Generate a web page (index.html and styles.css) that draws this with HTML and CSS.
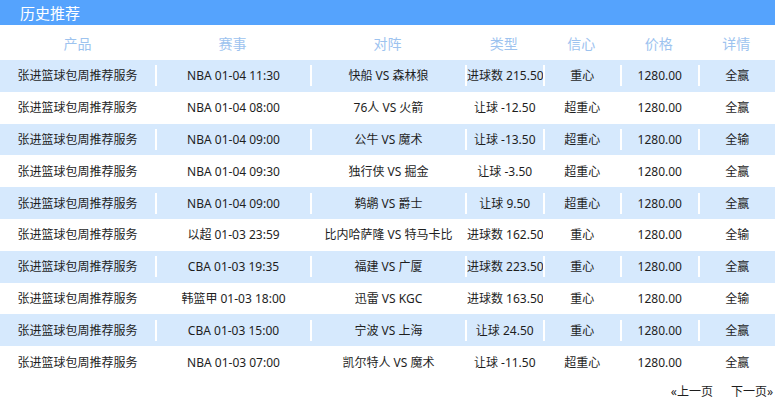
FILE: index.html
```html
<!DOCTYPE html>
<html lang="zh-CN">
<head>
<meta charset="utf-8">
<title>历史推荐</title>
<link rel="stylesheet" href="styles.css">
</head>
<body>
<div class="panel">
  <div class="title">历史推荐</div>
  <table class="grid">
    <colgroup>
      <col class="c-wide"><col class="c-wide"><col class="c-wide">
      <col class="c-narrow"><col class="c-narrow"><col class="c-narrow"><col class="c-narrow">
    </colgroup>
    <thead>
      <tr class="head">
        <th>产品</th><th>赛事</th><th>对阵</th><th>类型</th><th>信心</th><th>价格</th><th>详情</th>
      </tr>
    </thead>
    <tbody>
      <tr class="alt"><td><div class="cell">张进篮球包周推荐服务</div></td><td><div class="cell">NBA 01-04 11:30</div></td><td><div class="cell">快船 VS 森林狼</div></td><td><div class="cell">进球数 215.50</div></td><td><div class="cell">重心</div></td><td><div class="cell">1280.00</div></td><td><div class="cell">全赢</div></td></tr>
      <tr><td><div class="cell">张进篮球包周推荐服务</div></td><td><div class="cell">NBA 01-04 08:00</div></td><td><div class="cell">76人 VS 火箭</div></td><td><div class="cell">让球 -12.50</div></td><td><div class="cell">超重心</div></td><td><div class="cell">1280.00</div></td><td><div class="cell">全赢</div></td></tr>
      <tr class="alt"><td><div class="cell">张进篮球包周推荐服务</div></td><td><div class="cell">NBA 01-04 09:00</div></td><td><div class="cell">公牛 VS 魔术</div></td><td><div class="cell">让球 -13.50</div></td><td><div class="cell">超重心</div></td><td><div class="cell">1280.00</div></td><td><div class="cell">全输</div></td></tr>
      <tr><td><div class="cell">张进篮球包周推荐服务</div></td><td><div class="cell">NBA 01-04 09:30</div></td><td><div class="cell">独行侠 VS 掘金</div></td><td><div class="cell">让球 -3.50</div></td><td><div class="cell">超重心</div></td><td><div class="cell">1280.00</div></td><td><div class="cell">全赢</div></td></tr>
      <tr class="alt"><td><div class="cell">张进篮球包周推荐服务</div></td><td><div class="cell">NBA 01-04 09:00</div></td><td><div class="cell">鹈鹕 VS 爵士</div></td><td><div class="cell">让球 9.50</div></td><td><div class="cell">超重心</div></td><td><div class="cell">1280.00</div></td><td><div class="cell">全赢</div></td></tr>
      <tr><td><div class="cell">张进篮球包周推荐服务</div></td><td><div class="cell">以超 01-03 23:59</div></td><td><div class="cell">比内哈萨隆 VS 特马卡比</div></td><td><div class="cell">进球数 162.50</div></td><td><div class="cell">重心</div></td><td><div class="cell">1280.00</div></td><td><div class="cell">全输</div></td></tr>
      <tr class="alt"><td><div class="cell">张进篮球包周推荐服务</div></td><td><div class="cell">CBA 01-03 19:35</div></td><td><div class="cell">福建 VS 广厦</div></td><td><div class="cell">进球数 223.50</div></td><td><div class="cell">重心</div></td><td><div class="cell">1280.00</div></td><td><div class="cell">全赢</div></td></tr>
      <tr><td><div class="cell">张进篮球包周推荐服务</div></td><td><div class="cell">韩篮甲 01-03 18:00</div></td><td><div class="cell">迅雷 VS KGC</div></td><td><div class="cell">进球数 163.50</div></td><td><div class="cell">重心</div></td><td><div class="cell">1280.00</div></td><td><div class="cell">全输</div></td></tr>
      <tr class="alt"><td><div class="cell">张进篮球包周推荐服务</div></td><td><div class="cell">CBA 01-03 15:00</div></td><td><div class="cell">宁波 VS 上海</div></td><td><div class="cell">让球 24.50</div></td><td><div class="cell">重心</div></td><td><div class="cell">1280.00</div></td><td><div class="cell">全赢</div></td></tr>
      <tr><td><div class="cell">张进篮球包周推荐服务</div></td><td><div class="cell">NBA 01-03 07:00</div></td><td><div class="cell">凯尔特人 VS 魔术</div></td><td><div class="cell">让球 -11.50</div></td><td><div class="cell">超重心</div></td><td><div class="cell">1280.00</div></td><td><div class="cell">全赢</div></td></tr>
    </tbody>
  </table>
  <div class="pager">
    <a class="pg">«上一页</a>
    <a class="pg">下一页»</a>
  </div>
</div>
</body>
</html>
```

FILE: styles.css
```css
html, body {
  margin: 0;
  padding: 0;
  background: #fff;
}
body {
  font-family: "Noto Sans", "Noto Sans CJK SC", sans-serif;
  color: #1e1e1e;
}
.panel {
  width: 775px;
}
.title {
  height: 25px;
  line-height: 25px;
  background: #55a3fd;
  color: #fff;
  font-size: 15px;
  padding-left: 20px;
  font-family: "Noto Sans CJK SC", sans-serif;
}
.grid {
  width: 775px;
  border-collapse: collapse;
  table-layout: fixed;
}
.c-wide { width: 20%; }
.c-narrow { width: 10%; }
.grid th {
  height: 35px;
  padding: 0;
  font-weight: normal;
  font-size: 14px;
  color: #9dc3ef;
  text-align: center;
  font-family: "Noto Sans CJK SC", sans-serif;
}
.grid td {
  height: 31.8px;
  padding: 0;
  font-size: 12px;
  text-align: center;
  white-space: nowrap;
  overflow: hidden;
}
.grid tr.alt td {
  background: #d6e9fd;
}
.cell {
  height: 21px;
  line-height: 21px;
  border-left: 2px solid #fff;
  overflow: hidden;
  white-space: nowrap;
}
.grid td:first-child .cell {
  border-left: 0;
}
.pager {
  display: flex;
  justify-content: flex-end;
  gap: 18px;
  padding: 5px 2px 0 0;
  font-size: 12px;
  line-height: 18px;
}
.pg {
  color: #1e1e1e;
}
```
